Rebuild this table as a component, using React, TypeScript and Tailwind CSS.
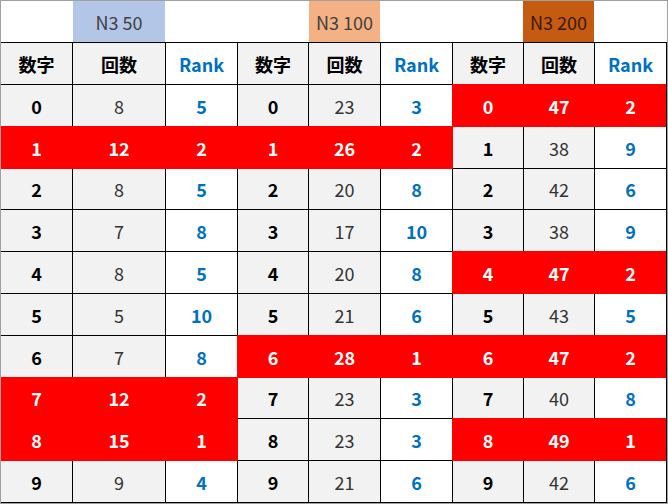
import React from 'react';

type Row = { n: number; count: number; rank: number };

const groups: { label: string; fill: string; text: string; rows: Row[] }[] = [
  {
    label: 'N3 50',
    fill: 'bg-[#b4c6e7]',
    text: 'text-[#404040]',
    rows: [
      { n: 0, count: 8, rank: 5 },
      { n: 1, count: 12, rank: 2 },
      { n: 2, count: 8, rank: 5 },
      { n: 3, count: 7, rank: 8 },
      { n: 4, count: 8, rank: 5 },
      { n: 5, count: 5, rank: 10 },
      { n: 6, count: 7, rank: 8 },
      { n: 7, count: 12, rank: 2 },
      { n: 8, count: 15, rank: 1 },
      { n: 9, count: 9, rank: 4 },
    ],
  },
  {
    label: 'N3 100',
    fill: 'bg-[#f4b183]',
    text: 'text-[#404040]',
    rows: [
      { n: 0, count: 23, rank: 3 },
      { n: 1, count: 26, rank: 2 },
      { n: 2, count: 20, rank: 8 },
      { n: 3, count: 17, rank: 10 },
      { n: 4, count: 20, rank: 8 },
      { n: 5, count: 21, rank: 6 },
      { n: 6, count: 28, rank: 1 },
      { n: 7, count: 23, rank: 3 },
      { n: 8, count: 23, rank: 3 },
      { n: 9, count: 21, rank: 6 },
    ],
  },
  {
    label: 'N3 200',
    fill: 'bg-[#c55a11]',
    text: 'text-[#3a1a06]',
    rows: [
      { n: 0, count: 47, rank: 2 },
      { n: 1, count: 38, rank: 9 },
      { n: 2, count: 42, rank: 6 },
      { n: 3, count: 38, rank: 9 },
      { n: 4, count: 47, rank: 2 },
      { n: 5, count: 43, rank: 5 },
      { n: 6, count: 47, rank: 2 },
      { n: 7, count: 40, rank: 8 },
      { n: 8, count: 49, rank: 1 },
      { n: 9, count: 42, rank: 6 },
    ],
  },
];

// top ranks are flagged red
const isHot = (r: Row) => r.rank <= 2;

const red = 'bg-[#ff0000] text-white font-bold shadow-[0_0_0_1px_#ff0000]';

const App: React.FC = () => {
  return (
    <div
      className="w-[668px] h-[504px] border border-[#a0a0a0] bg-white text-[18px] leading-none"
      style={{ fontFamily: '"Noto Sans CJK JP", "Noto Sans", sans-serif' }}
    >
      {/* group titles */}
      <div className="h-[41px] grid grid-cols-[72px_92px_73px_71px_71px_72px_71px_71px_72px] text-[18px]">
        <div />
        <div className={`${groups[0].fill} ${groups[0].text} flex items-center justify-center`}>{groups[0].label}</div>
        <div />
        <div />
        <div className={`${groups[1].fill} ${groups[1].text} flex items-center justify-center`}>{groups[1].label}</div>
        <div />
        <div />
        <div className={`${groups[2].fill} ${groups[2].text} flex items-center justify-center`}>{groups[2].label}</div>
        <div />
      </div>

      <div className="bg-black pt-px pr-px pb-px">
        <div className="overflow-hidden grid gap-px grid-cols-[71px_92px_71px_70px_71px_71px_70px_70px_71px] grid-rows-[41px_41px_41px_40px_41px_41px_41px_41px_40px_41px_41px]">
          {groups.map((g) => (
            <React.Fragment key={g.label + '-h'}>
              <div className="bg-[#f2f2f2] font-bold text-black flex items-center justify-center">数字</div>
              <div className="bg-[#f2f2f2] font-bold text-black flex items-center justify-center">回数</div>
              <div className="bg-white font-bold text-[#0070c0] flex items-center justify-center">Rank</div>
            </React.Fragment>
          ))}
          {groups[0].rows.map((_, i) =>
            groups.map((g) => {
              const r = g.rows[i];
              const hot = isHot(r);
              return (
                <React.Fragment key={g.label + i}>
                  <div className={`flex items-center justify-center ${hot ? red : 'bg-[#f2f2f2] font-bold text-black'}`}>{r.n}</div>
                  <div className={`flex items-center justify-center ${hot ? red : 'bg-[#f2f2f2] text-[#333333]'}`}>{r.count}</div>
                  <div className={`flex items-center justify-center ${hot ? red : 'bg-white font-bold text-[#0070c0]'}`}>{r.rank}</div>
                </React.Fragment>
              );
            })
          )}
        </div>
      </div>
    </div>
  );
};

export default App;
